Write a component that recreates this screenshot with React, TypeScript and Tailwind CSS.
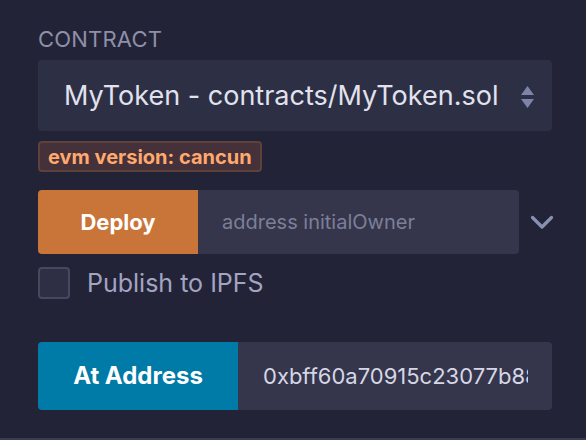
import React from "react";

export default function App() {
  return (
    <div
      className="box-border h-[440px] w-[586px] overflow-hidden border-b-[2px] border-[#3a3c50] bg-[#222336] px-[38px] pt-[26px]"
      style={{ fontFamily: "Inter, 'Noto Sans', sans-serif" }}
    >
      <div className="text-[22px] leading-[26px] tracking-[0.2px] text-[#8d90a8]">CONTRACT</div>

      <div className="mt-[8px] flex h-[71px] w-[514px] items-center justify-between rounded-[4px] bg-[#2d2f45] pl-[26px] pr-[18px]">
        <span className="text-[27px] leading-none text-[#e1e2ee]">MyToken - contracts/MyToken.sol</span>
        <svg width="13" height="22" viewBox="0 0 13 22" className="mt-[2px]">
          <polygon points="0,9 6.5,0 13,9" fill="#7d84a8" />
          <polygon points="0,13 6.5,22 13,13" fill="#7d84a8" />
        </svg>
      </div>

      <div className="mt-[10px] inline-flex h-[31px] items-center rounded-[4px] border-[2px] border-[#5e4139] bg-[#45313a] px-[8px]">
        <span className="text-[20px] font-bold leading-none text-[#ffa96e]">evm version: cancun</span>
      </div>

      <div className="mt-[18px] flex h-[64px] w-[514px] items-center">
        <div className="flex h-full w-[160px] items-center justify-center rounded-l-[4px] bg-[#c97539]">
          <span className="text-[22px] font-bold leading-none text-white">Deploy</span>
        </div>
        <div className="flex h-full w-[321px] items-center rounded-r-[4px] bg-[#35364c] pl-[24px]">
          <span className="text-[20px] leading-none text-[#7c7f98]">address initialOwner</span>
        </div>
        <div className="flex flex-1 items-center justify-end">
          <svg width="24" height="15" viewBox="0 0 24 15" className="mr-[-2px]">
            <polyline
              points="2.5,2.5 12,12 21.5,2.5"
              fill="none"
              stroke="#8a90b2"
              strokeWidth="3.2"
              strokeLinecap="round"
              strokeLinejoin="round"
            />
          </svg>
        </div>
      </div>

      <div className="mt-[13px] flex items-center">
        <div className="box-border h-[32px] w-[32px] rounded-[4px] border-[2px] border-[#464860] bg-[#2e2f45]" />
        <span className="ml-[17px] text-[25px] leading-none text-[#a3a4c2]">Publish to IPFS</span>
      </div>

      <div className="mt-[43px] flex h-[68px] w-[514px]">
        <div className="flex h-full w-[200px] items-center justify-center rounded-l-[4px] bg-[#007aa6]">
          <span className="text-[24px] font-bold leading-none text-white">At Address</span>
        </div>
        <div className="flex h-full min-w-0 flex-1 items-center rounded-r-[4px] bg-[#35364c] pl-[25px] pr-[24px]">
          <span className="block min-w-0 flex-1 overflow-hidden whitespace-nowrap text-[22px] leading-[28px] text-[#d5d7e6]">
            0xbff60a70915c23077b88e1a2b3c4d5e6f7a8b9c0
          </span>
        </div>
      </div>
    </div>
  );
}
